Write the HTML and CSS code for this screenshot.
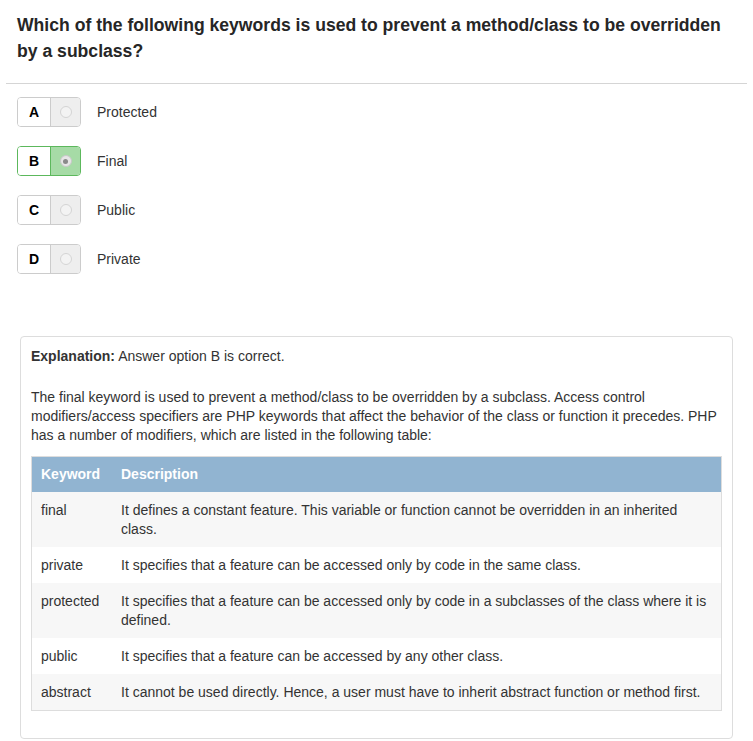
FILE: index.html
```html
<!DOCTYPE html>
<html>
<head>
<meta charset="utf-8">
<link rel="stylesheet" href="styles.css">
</head>
<body>
<div class="page">
  <h2 class="question">Which of the following keywords is used to prevent a method/class to be overridden by a subclass?</h2>
  <hr class="rule">
  <div class="options">
    <div class="option">
      <div class="choice"><span class="letter">A</span><span class="radio-cell"><span class="radio"></span></span></div>
      <span class="label">Protected</span>
    </div>
    <div class="option">
      <div class="choice selected"><span class="letter">B</span><span class="radio-cell"><span class="radio"><span class="dot"></span></span></span></div>
      <span class="label">Final</span>
    </div>
    <div class="option">
      <div class="choice"><span class="letter">C</span><span class="radio-cell"><span class="radio"></span></span></div>
      <span class="label">Public</span>
    </div>
    <div class="option">
      <div class="choice"><span class="letter">D</span><span class="radio-cell"><span class="radio"></span></span></div>
      <span class="label">Private</span>
    </div>
  </div>
  <div class="panel">
    <p class="lead"><b>Explanation:</b> Answer option B is correct.</p>
    <p class="body">The final keyword is used to prevent a method/class to be overridden by a subclass. Access control modifiers/access specifiers are PHP keywords that affect the behavior of the class or function it precedes. PHP has a number of modifiers, which are listed in the following table:</p>
    <table class="tbl">
      <thead>
        <tr><th class="c1">Keyword</th><th>Description</th></tr>
      </thead>
      <tbody>
        <tr><td class="c1">final</td><td>It defines a constant feature. This variable or function cannot be overridden in an inherited class.</td></tr>
        <tr><td class="c1">private</td><td>It specifies that a feature can be accessed only by code in the same class.</td></tr>
        <tr><td class="c1">protected</td><td>It specifies that a feature can be accessed only by code in a subclasses of the class where it is defined.</td></tr>
        <tr><td class="c1">public</td><td>It specifies that a feature can be accessed by any other class.</td></tr>
        <tr><td class="c1">abstract</td><td>It cannot be used directly. Hence, a user must have to inherit abstract function or method first.</td></tr>
      </tbody>
    </table>
  </div>
</div>
</body>
</html>
```
FILE: styles.css
```css
html, body {
  margin: 0;
  padding: 0;
  background: #fff;
}
body {
  font-family: "Liberation Sans", Arial, sans-serif;
  font-size: 14px;
  line-height: 19px;
  color: #333;
}
.page {
  padding: 0 6px;
}
.question {
  margin: 0;
  padding: 12px 25px 0 11px;
  font-size: 17.6px;
  line-height: 26px;
  font-weight: bold;
  color: #262626;
}
.rule {
  margin: 19px 0 13px 0;
  border: 0;
  border-top: 1px solid #d5d5d5;
  height: 0;
}
.options {
  display: flex;
  flex-direction: column;
  gap: 19px;
  padding-left: 11px;
}
.option {
  display: flex;
  align-items: center;
  height: 30px;
}
.choice {
  display: flex;
  height: 30px;
  width: 64px;
  box-sizing: border-box;
  border: 1px solid #ccc;
  border-radius: 4px;
  overflow: hidden;
}
.letter {
  width: 32px;
  display: flex;
  align-items: center;
  justify-content: center;
  font-weight: bold;
  font-size: 14px;
  color: #000;
  background: #fff;
  border-right: 1px solid #ccc;
}
.radio-cell {
  flex: 1;
  display: flex;
  align-items: center;
  justify-content: center;
  background: #eee;
}
.radio {
  width: 12px;
  height: 12px;
  box-sizing: border-box;
  border-radius: 50%;
  border: 1px solid #d4d4d4;
  background: #f3f3f3;
  display: flex;
  align-items: center;
  justify-content: center;
}
.choice.selected {
  border-color: #5cb85c;
}
.choice.selected .letter {
  border-right-color: #5cb85c;
}
.choice.selected .radio-cell {
  background: #a6dba6;
}
.choice.selected .radio {
  border-color: #c8c8c8;
  background: #e6e6e6;
}
.dot {
  width: 5px;
  height: 5px;
  border-radius: 50%;
  background: #8a8a8a;
}
.label {
  margin-left: 16px;
  font-size: 14px;
  color: #333;
}
.panel {
  margin: 62px 14px 0 14px;
  border: 1px solid #ddd;
  border-radius: 4px;
  padding: 10px 10px 27px 10px;
}
.lead {
  margin: 0 0 22px 0;
}
.body {
  margin: 0 0 11px 0;
}
.tbl {
  width: 100%;
  border-collapse: collapse;
  border: 1px solid #ddd;
}
.tbl th {
  background: #91b4d1;
  color: #fff;
  text-align: left;
  font-weight: bold;
  padding: 8px 10px 8px 9px;
  vertical-align: top;
}
.tbl td {
  padding: 9px 10px 8px 9px;
  vertical-align: top;
}
.tbl th.c1, .tbl td.c1 {
  width: 60px;
  padding-right: 11px;
}
.tbl tbody tr:nth-child(odd) td {
  background: #f7f7f7;
}
.tbl tbody tr:nth-child(even) td {
  background: #fff;
}
```
